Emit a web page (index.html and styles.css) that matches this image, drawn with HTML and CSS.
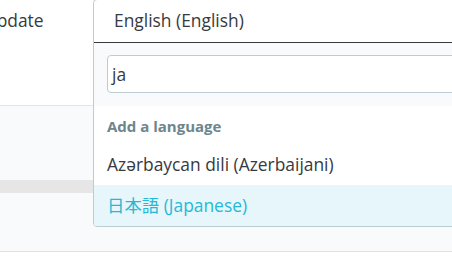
FILE: index.html
```html
<!DOCTYPE html>
<html>
<head>
<meta charset="utf-8">
<link rel="stylesheet" href="styles.css">
</head>
<body>
<div class="page">
  <div class="row-top">
    <span class="label">Update</span>
  </div>
  <div class="row-mid"></div>
  <div class="band"></div>
  <div class="row-low"></div>
  <div class="row-end"></div>

  <div class="dropdown">
    <div class="selected">English (English)</div>
    <div class="search-area">
      <div class="search-input">ja</div>
    </div>
    <div class="group-label">Add a language</div>
    <div class="option">Azərbaycan dili (Azerbaijani)</div>
    <div class="option option-active">日本語 (Japanese)</div>
  </div>
</div>
</body>
</html>
```

FILE: styles.css
```css
html, body {
  margin: 0;
  padding: 0;
  background: #ffffff;
}

body {
  font-family: "Open Sans", "Noto Sans CJK JP", sans-serif;
  color: #363a41;
  overflow: hidden;
}

.page {
  position: relative;
  width: 452px;
  height: 273px;
  overflow: hidden;
}

.row-top {
  height: 105px;
  border-bottom: 1px solid #dfe6e8;
  background: #ffffff;
}

.label {
  display: block;
  margin-left: -16px;
  padding-top: 8px;
  font-size: 17.4px;
  line-height: 24px;
  white-space: nowrap;
}

.row-mid {
  height: 74px;
  background: #f8fafb;
}

.band {
  height: 13px;
  background: #e6e6e6;
}

.row-low {
  height: 58px;
  background: #f8fafb;
  border-bottom: 1px solid #dbe3e6;
}

.row-end {
  height: 21px;
  background: #ffffff;
}

.dropdown {
  position: absolute;
  left: 93px;
  top: -1px;
  width: 380px;
  background: #ffffff;
  border: 1px solid #bbcdd2;
  border-radius: 4px;
  overflow: hidden;
}

.selected {
  height: 43px;
  box-sizing: border-box;
  padding-left: 20px;
  padding-top: 8px;
  font-size: 17.4px;
  line-height: 24px;
  border-bottom: 1px solid #363a41;
}

.search-area {
  background: #f8fafb;
  padding: 12px 0 13px 13px;
}

.search-input {
  height: 38px;
  box-sizing: border-box;
  border: 1px solid #bbcdd2;
  border-radius: 4px;
  background: #ffffff;
  padding-left: 4px;
  font-size: 17.4px;
  line-height: 36px;
}

.group-label {
  height: 37px;
  box-sizing: border-box;
  padding-left: 13px;
  padding-top: 10px;
  font-size: 15px;
  font-weight: 700;
  line-height: 20px;
  color: #6c868e;
}

.option {
  height: 42px;
  box-sizing: border-box;
  padding-left: 13px;
  font-size: 17.4px;
  line-height: 42px;
  color: #363a41;
}

.option-active {
  height: 41px;
  line-height: 41px;
  background: #e7f6fa;
  color: #25b9d7;
}
```
